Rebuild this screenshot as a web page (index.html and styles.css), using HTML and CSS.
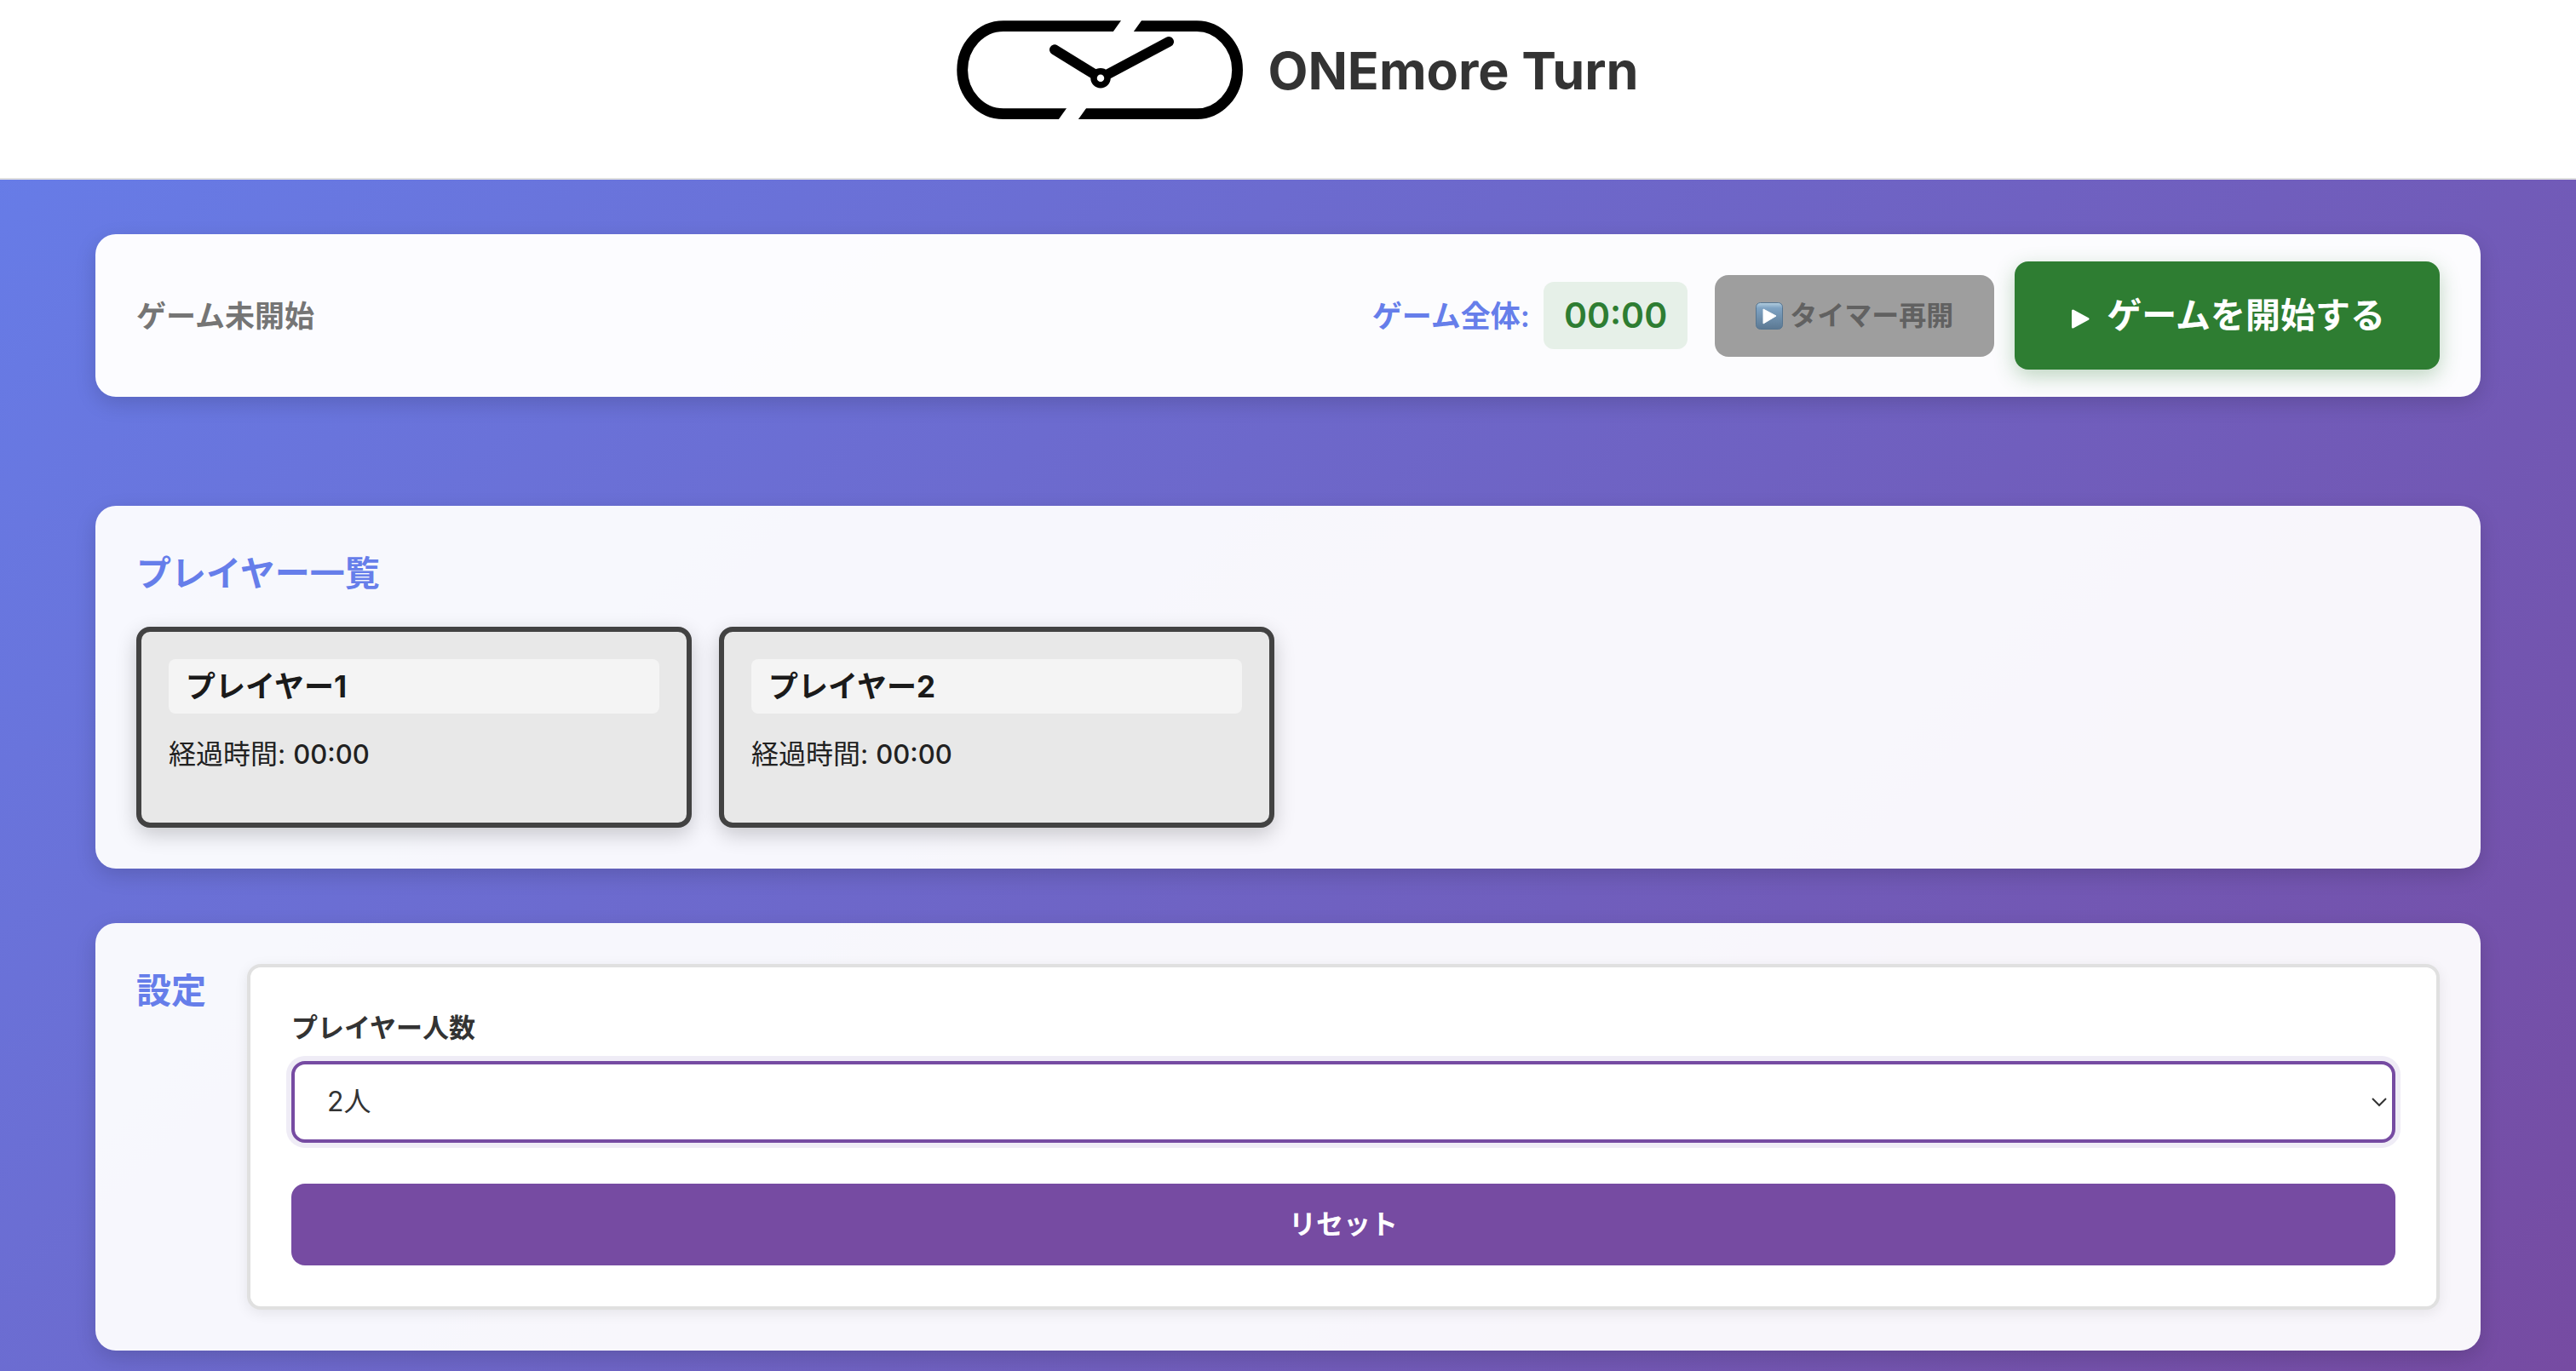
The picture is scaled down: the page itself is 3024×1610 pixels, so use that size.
FILE: index.html
```html
<!DOCTYPE html>
<html lang="ja">
<head>
<meta charset="utf-8">
<meta name="viewport" content="width=device-width, initial-scale=1">
<title>ONEmore Turn</title>
<link rel="stylesheet" href="styles.css">
</head>
<body>
<header class="site-header">
  <svg class="logo" viewBox="0 0 380 166" aria-hidden="true">
    <path d="M78 30.700H305C331 30.700 352.600 54 352.600 82.200S331 133.700 305 133.700H78C51 133.700 29.700 110 29.700 82.200S51 30.700 78 30.700Z" fill="none" stroke="#000" stroke-width="12.800"/>
    <path fill="#fff" d="M219 20H243L228 41H204ZM155 123H178L163 144H140Z"/>
    <path d="M138 58.300L192 91.700L272 49" fill="none" stroke="#000" stroke-linecap="round" stroke-width="12"/>
    <circle cx="192" cy="91.700" r="8" fill="#fff" stroke="#000" stroke-width="7.500"/>
  </svg>
  <h1 class="brand">ONEmore Turn</h1>
</header>
<main class="page">
  <section class="card controls">
    <p class="status">ゲーム未開始</p>
    <div class="actions">
      <div class="total">
        <span class="total-label">ゲーム全体:</span>
        <span class="total-time">00:00</span>
      </div>
      <div class="buttons">
        <button class="btn btn-timer" type="button" disabled>
          <svg class="play-emoji" viewBox="0 0 32 32" aria-hidden="true">
            <defs><linearGradient id="tile" x1="0" y1="0" x2="0" y2="1">
              <stop offset="0" stop-color="#b5cfdf"/><stop offset=".2" stop-color="#7fa3c3"/><stop offset="1" stop-color="#5b7892"/>
            </linearGradient></defs>
            <rect x=".5" y=".5" width="31" height="31" rx="5" fill="url(#tile)" stroke="#567590"/>
            <path d="M9 8L24 16L9 25Z" fill="#fff" stroke="#fff" stroke-linejoin="round"/>
          </svg>
          タイマー再開
        </button>
        <button class="btn btn-start" type="button">
          <svg class="play-mark" viewBox="0 0 24 30" aria-hidden="true"><path d="M4.500 9L22 18.500L4.500 28Z" fill="#fff" stroke="#fff" stroke-width="3" stroke-linejoin="round"/></svg>
          ゲームを開始する
        </button>
      </div>
    </div>
  </section>

  <section class="card players">
    <h2 class="section-title">プレイヤー一覧</h2>
    <ul class="player-list">
      <li class="player">
        <h3 class="player-name">プレイヤー1</h3>
        <p class="elapsed">経過時間: <span class="elapsed-time">00:00</span></p>
      </li>
      <li class="player">
        <h3 class="player-name">プレイヤー2</h3>
        <p class="elapsed">経過時間: <span class="elapsed-time">00:00</span></p>
      </li>
    </ul>
  </section>

  <section class="card settings">
    <h2 class="section-title">設定</h2>
    <form class="settings-form">
      <label class="field-label" for="player-count">プレイヤー人数</label>
      <div class="select-wrap">
        <select class="select" id="player-count">
          <option selected>2人</option>
          <option>3人</option>
          <option>4人</option>
        </select>
        <svg class="chevron" viewBox="0 0 20 12" aria-hidden="true"><path d="M2 2L10 10L18 2" fill="none" stroke="#333" stroke-width="2"/></svg>
      </div>
      <button class="btn btn-reset" type="button">リセット</button>
    </form>
  </section>
</main>
</body>
</html>
```
FILE: styles.css
```css
* {
  box-sizing: border-box;
  margin: 0;
  padding: 0;
}

body {
  min-height: 100vh;
  display: flex;
  flex-direction: column;
  font-family: Inter, "Noto Sans CJK JP", sans-serif;
  font-size: 32px;
  line-height: 48px;
  color: #333;
  background: linear-gradient(135deg, #667eea 0%, #764ba2 100%);
}

.site-header {
  display: flex;
  justify-content: center;
  gap: 8px;
  padding-bottom: 43px;
  background: #fff;
  border-bottom: 2px solid #e0e0e0;
}

.logo {
  width: 380px;
  height: 166px;
}

.brand {
  font-size: 61px;
  line-height: 166px;
  font-weight: 700;
}

.page {
  flex: 1;
  display: flex;
  flex-direction: column;
  gap: 64px;
  padding: 64px 112px 24px;
}

.card {
  padding: 48px;
  border-radius: 24px;
  background: rgba(255, 255, 255, 0.95);
  box-shadow: 0 8px 24px rgba(0, 0, 0, 0.15);
}

.controls {
  display: flex;
  align-items: center;
  justify-content: space-between;
  margin-bottom: 64px;
  padding: 32px 48px;
  background: rgba(255, 255, 255, 0.98);
}

.status {
  font-size: 35px;
  font-weight: 600;
  color: #757575;
}

.actions {
  display: flex;
  align-items: center;
  gap: 32px;
}

.total {
  display: flex;
  align-items: center;
  gap: 16px;
}

.total-label {
  font-size: 35px;
  font-weight: 600;
  color: #667eea;
}

.total-time {
  padding: 8px 24px;
  border-radius: 12px;
  font-size: 41px;
  line-height: 63px;
  font-weight: 600;
  color: #2e7d32;
  background: #e6f0e8;
}

.buttons {
  display: flex;
  align-items: center;
  gap: 24px;
}

.btn {
  display: flex;
  align-items: center;
  justify-content: center;
  border: 0;
  border-radius: 16px;
  font: inherit;
  font-weight: 600;
  color: #fff;
}

.btn-timer {
  gap: 8px;
  padding: 24px 48px;
  color: #616161;
  background: #9e9e9e;
}

.play-emoji {
  width: 32px;
  height: 32px;
}

.btn-start {
  gap: 20px;
  padding: 32px 64px;
  font-size: 41px;
  line-height: 63px;
  background: #2e7d32;
  box-shadow: 0 8px 24px rgba(46, 125, 50, 0.3);
}

.play-mark {
  width: 24px;
  height: 30px;
}

.section-title {
  font-size: 41px;
  line-height: 62px;
  font-weight: 600;
  color: #667eea;
}

.players .section-title {
  margin-bottom: 32px;
}

.player-list {
  display: grid;
  grid-template-columns: repeat(auto-fill, minmax(560px, 1fr));
  gap: 32px;
  list-style: none;
}

.player {
  min-height: 236px;
  padding: 32px;
  border: 6px solid #424242;
  border-radius: 16px;
  background: #e8e8e8;
  box-shadow: 0 8px 24px rgba(0, 0, 0, 0.2);
}

.player-name {
  margin-bottom: 24px;
  padding: 8px 20px;
  border-radius: 8px;
  font-size: 35px;
  font-weight: 700;
  color: #1a1a1a;
  background: rgba(255, 255, 255, 0.5);
}

.elapsed {
  color: #212121;
}

.elapsed-time {
  font-size: 31px;
  font-weight: 500;
}

.settings {
  display: flex;
  gap: 48px;
}

.settings-form {
  flex: 1;
  padding: 48px;
  border: 4px solid #e0e0e0;
  border-radius: 16px;
  background: #fff;
  box-shadow: 0 4px 16px rgba(0, 0, 0, 0.08);
}

.field-label {
  display: block;
  margin-bottom: 16px;
  font-size: 31px;
  line-height: 46px;
  font-weight: 600;
}

.select-wrap {
  position: relative;
  margin-bottom: 48px;
}

.select {
  display: block;
  width: 100%;
  height: 96px;
  padding: 0 38px;
  border: 4px solid #764ba2;
  border-radius: 16px;
  appearance: none;
  font: inherit;
  color: #333;
  background: #fff;
  box-shadow: 0 0 0 6px #efecf6;
}

.chevron {
  position: absolute;
  top: 42px;
  right: 9px;
  width: 20px;
  height: 12px;
  pointer-events: none;
}

.btn-reset {
  width: 100%;
  height: 96px;
  background: #764ba2;
}
```
